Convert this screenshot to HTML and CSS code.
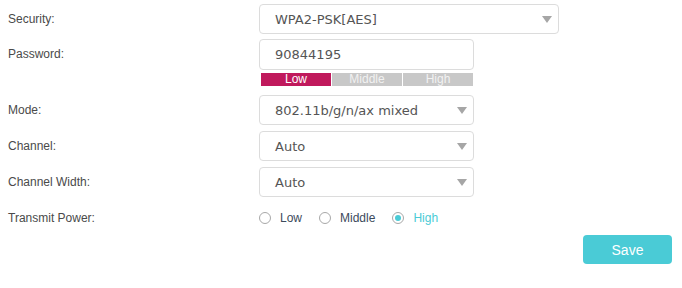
FILE: index.html
```html
<!DOCTYPE html>
<html lang="en">
<head>
 <meta charset="UTF-8">
 <title>Wireless Settings</title>
 <link rel="stylesheet" href="styles.css">
</head>
<body>
 <form class="settings">
  <div class="row row-security">
   <label class="row-label">Security:</label>
   <div class="select select-wide"><span>WPA2-PSK[AES]</span><i class="arrow"></i></div>
  </div>
  <div class="row row-password">
   <label class="row-label">Password:</label>
   <div class="control">
    <div class="text-input">90844195</div>
    <div class="strength">
     <span class="level level-on">Low</span>
     <span class="level">Middle</span>
     <span class="level">High</span>
    </div>
   </div>
  </div>
  <div class="row row-mode">
   <label class="row-label">Mode:</label>
   <div class="select"><span>802.11b/g/n/ax mixed</span><i class="arrow"></i></div>
  </div>
  <div class="row row-channel">
   <label class="row-label">Channel:</label>
   <div class="select"><span>Auto</span><i class="arrow"></i></div>
  </div>
  <div class="row row-width">
   <label class="row-label">Channel Width:</label>
   <div class="select"><span>Auto</span><i class="arrow"></i></div>
  </div>
  <div class="row row-power">
   <label class="row-label">Transmit Power:</label>
   <div class="radios">
    <span class="radio"><i class="dot"></i>Low</span>
    <span class="radio"><i class="dot"></i>Middle</span>
    <span class="radio radio-on"><i class="dot"></i>High</span>
   </div>
  </div>
  <div class="actions">
   <button type="button" class="save">Save</button>
  </div>
 </form>
</body>
</html>
```

FILE: styles.css
```css
body {
 margin: 0;
 background: #ffffff;
 font-family: "Liberation Sans", Arial, sans-serif;
 font-size: 12px;
 color: #4a4a4a;
}

.settings {
 padding-top: 4px;
}

.row {
 display: flex;
 align-items: flex-start;
}

.row-label {
 width: 259px;
 padding-left: 8px;
 box-sizing: border-box;
 line-height: 30px;
 flex-shrink: 0;
}

.row-security { margin-bottom: 5px; }
.row-password { margin-bottom: 9px; }
.row-mode, .row-channel { margin-bottom: 6px; }
.row-width { margin-bottom: 11px; }

.select, .text-input {
 box-sizing: border-box;
 width: 215px;
 height: 30px;
 border: 1px solid #dcdcdc;
 border-radius: 4px;
 padding-left: 15px;
 display: flex;
 align-items: center;
 font-family: "DejaVu Sans", Verdana, sans-serif;
 font-size: 13px;
 color: #555555;
}

.select {
 justify-content: space-between;
 padding-right: 6px;
}

.select-wide {
 width: 300px;
}

.text-input {
 height: 31px;
}

.arrow {
 width: 0;
 height: 0;
 border-left: 5px solid transparent;
 border-right: 5px solid transparent;
 border-top: 7px solid #a6a6a6;
}

.strength {
 display: flex;
 margin-top: 3px;
 padding-left: 2px;
}

.level {
 width: 70px;
 height: 13px;
 line-height: 13px;
 text-align: center;
 background: #c8c8c8;
 color: #f2f2f2;
 font-size: 12px;
}

.level + .level {
 margin-left: 1px;
}

.level-on {
 background: #c0195c;
 color: #ffffff;
}

.row-power .row-label {
 line-height: 20px;
}

.radios {
 display: flex;
 align-items: center;
 height: 20px;
}

.radio {
 display: flex;
 align-items: center;
 margin-right: 17px;
 color: #3c4a5c;
}

.dot {
 width: 12px;
 height: 12px;
 box-sizing: border-box;
 border: 1px solid #a8a8a8;
 border-radius: 50%;
 margin-right: 9px;
 position: relative;
}

.radio-on {
 color: #4acbd6;
}

.radio-on .dot::after {
 content: "";
 position: absolute;
 left: 2px;
 top: 2px;
 width: 6px;
 height: 6px;
 border-radius: 50%;
 background: #4acbd6;
}

.actions {
 display: flex;
 justify-content: flex-end;
 padding-right: 10px;
 margin-top: 7px;
}

.save {
 width: 89px;
 height: 29px;
 border: none;
 border-radius: 4px;
 background: #4acbd6;
 color: #ffffff;
 font-family: "Liberation Sans", Arial, sans-serif;
 font-size: 14px;
 cursor: pointer;
}
```
